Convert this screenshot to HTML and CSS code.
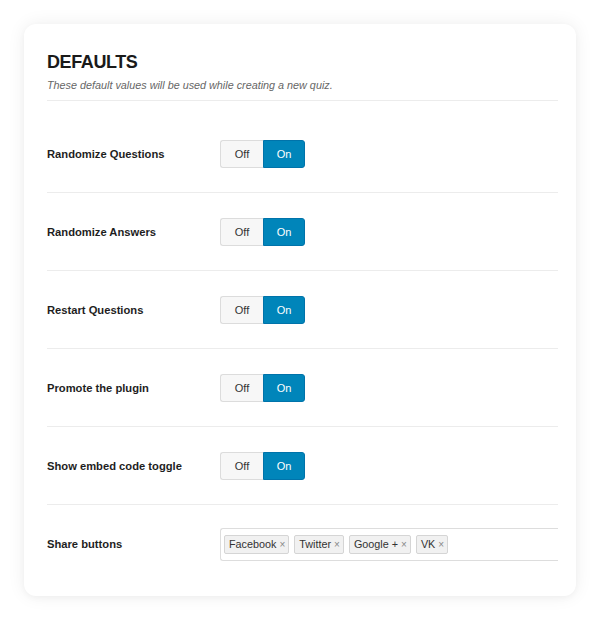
FILE: index.html
```html
<!DOCTYPE html>
<html lang="en">
<head>
    <meta charset="UTF-8" />
    <meta name="viewport" content="width=device-width, initial-scale=1.0"/>
    <title>Defaults</title>

    <link rel="stylesheet" href="styles.css">
</head>
<body>
    <div class="card">
        <div class="header">
            <h1>DEFAULTS</h1>
            <p>These default values will be used while creating a new quiz.</p>
        </div>

        <div class="settings">
            <div class="row first">
                <label>Randomize Questions</label>
                <div class="toggle"><span class="off">Off</span><span class="on">On</span></div>
            </div>
            <div class="row">
                <label>Randomize Answers</label>
                <div class="toggle"><span class="off">Off</span><span class="on">On</span></div>
            </div>
            <div class="row">
                <label>Restart Questions</label>
                <div class="toggle"><span class="off">Off</span><span class="on">On</span></div>
            </div>
            <div class="row">
                <label>Promote the plugin</label>
                <div class="toggle"><span class="off">Off</span><span class="on">On</span></div>
            </div>
            <div class="row">
                <label>Show embed code toggle</label>
                <div class="toggle"><span class="off">Off</span><span class="on">On</span></div>
            </div>
            <div class="row last">
                <label>Share buttons</label>
                <div class="tags">
                    <span class="tag">Facebook <i>×</i></span>
                    <span class="tag">Twitter <i>×</i></span>
                    <span class="tag">Google + <i>×</i></span>
                    <span class="tag">VK <i>×</i></span>
                </div>
            </div>
        </div>
    </div>
</body>
</html>
```

FILE: styles.css
```css
body {
    margin: 0;
    padding: 24px;
    background: #fff;
    font-family: "Liberation Sans", Arial, sans-serif;
    color: #1e1e1e;
}

.card {
    width: 552px;
    height: 572px;
    box-sizing: border-box;
    background: #fff;
    border-radius: 12px;
    box-shadow: 0 0 18px rgba(0, 0, 0, 0.07), 0 2px 6px rgba(0, 0, 0, 0.03);
    padding: 27px 18px 0 23px;
    overflow: hidden;
}

.header {
    border-bottom: 1px solid #ececec;
    padding-bottom: 8px;
}

.header h1 {
    margin: 0;
    font-size: 18px;
    font-weight: bold;
    letter-spacing: -0.4px;
    line-height: 22px;
    color: #1a1a1a;
}

.header p {
    margin: 5px 0 0;
    font-size: 10.8px;
    font-style: italic;
    color: #666;
    line-height: 14px;
}

.settings {
    overflow: hidden;
}

.row {
    display: flex;
    align-items: center;
    height: 78px;
    box-sizing: border-box;
    border-bottom: 1px solid #ececec;
}

.row.first {
    height: 92px;
    padding-top: 14px;
}

.row.last {
    border-bottom: none;
}

.row label {
    width: 173px;
    font-size: 11.2px;
    font-weight: bold;
    color: #1e1e1e;
}

.toggle {
    display: flex;
    height: 28px;
    font-size: 11px;
}

.toggle span {
    display: flex;
    align-items: center;
    justify-content: center;
    box-sizing: border-box;
}

.toggle .off {
    width: 43px;
    background: #f7f7f7;
    border: 1px solid #dcdcdc;
    border-right: none;
    border-radius: 3px 0 0 3px;
    color: #333;
}

.toggle .on {
    width: 42px;
    background: #0085ba;
    border: 1px solid #0073aa;
    border-radius: 0 3px 3px 0;
    color: #fff;
}

.tags {
    flex: 1;
    display: flex;
    gap: 5px;
    height: 33px;
    box-sizing: border-box;
    border: 1px solid #dddddd;
    border-right: none;
    border-radius: 3px 0 0 3px;
    padding: 0 3px;
    align-items: center;
    margin-top: 1px;
    margin-right: -1px;
}

.tag {
    display: inline-block;
    height: 19px;
    line-height: 17px;
    box-sizing: border-box;
    padding: 0 3px 0 4px;
    background: #f1f1f1;
    border: 1px solid #d5d5d5;
    border-radius: 2px;
    font-size: 10.8px;
    color: #333;
}

.tag i {
    font-style: normal;
    color: #888;
    font-size: 10px;
}
```
